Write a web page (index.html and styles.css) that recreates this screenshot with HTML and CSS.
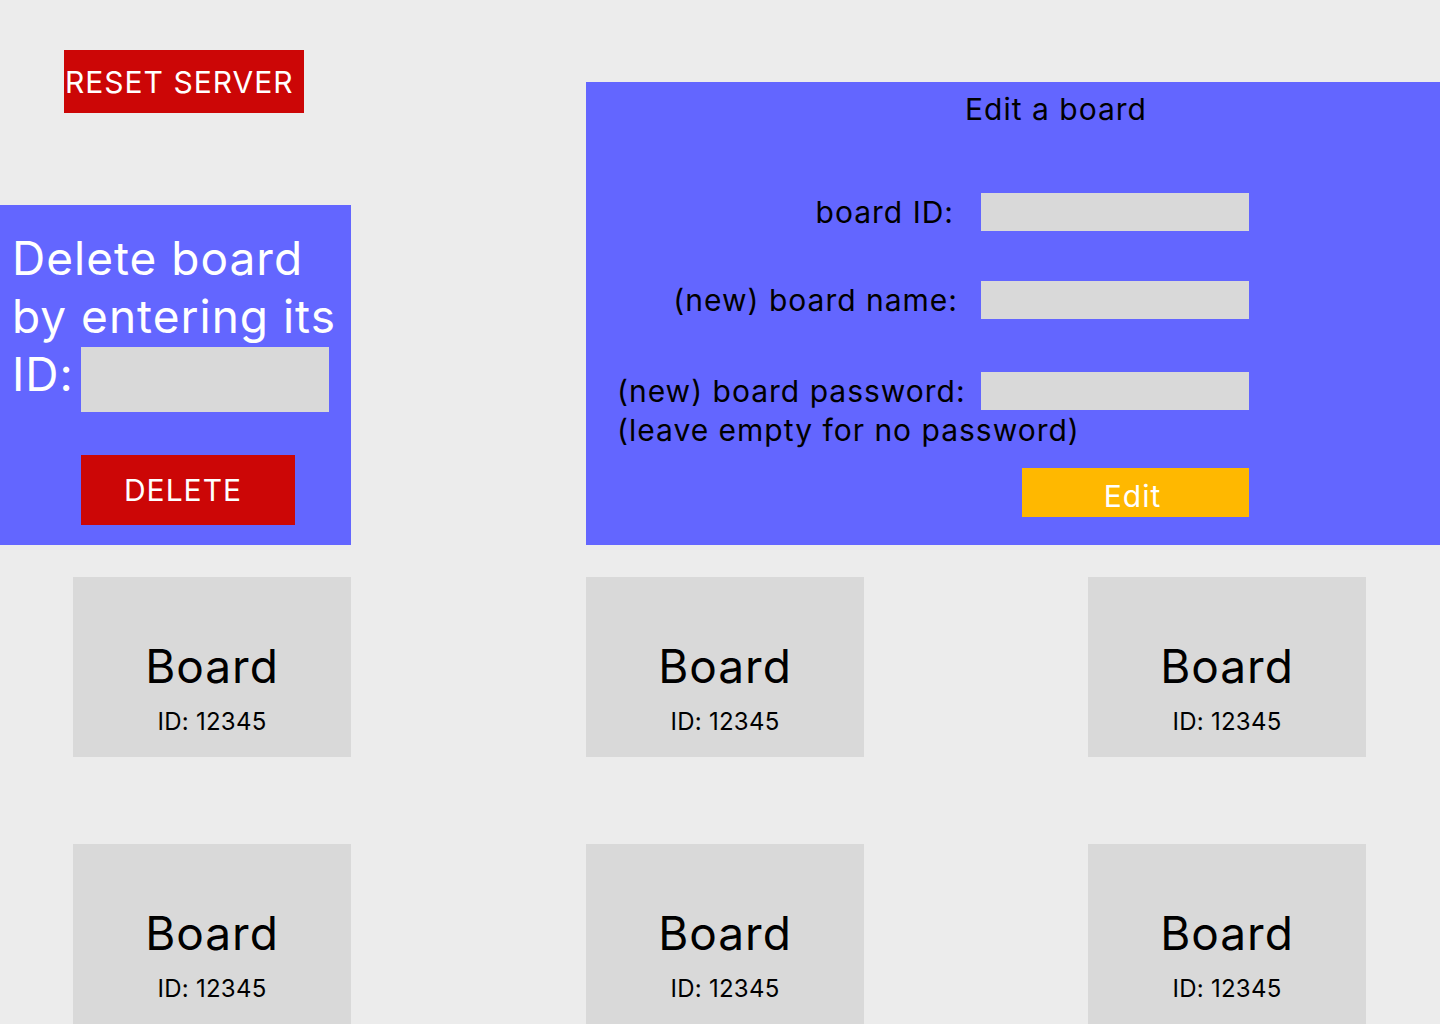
FILE: index.html
```html
<!DOCTYPE html>
<html lang="en">
<head>
<meta charset="utf-8">
<title>Boards admin</title>
<link rel="stylesheet" href="styles.css">
</head>
<body>
<div class="top">
  <div class="left-col">
    <button class="reset-btn">RESET SERVER</button>
    <div class="delete-panel">
      <p class="delete-text">Delete board<br>by entering its<br>ID: <span class="delete-input"></span></p>
      <button class="delete-btn">DELETE</button>
    </div>
  </div>
  <div class="edit-panel">
    <h2 class="edit-title">Edit a board</h2>
    <div class="edit-form">
      <label class="lbl lbl-id">board ID:</label>
      <span class="field"></span>
      <label class="lbl lbl-name">(new) board name:</label>
      <span class="field"></span>
      <label class="lbl lbl-pass">(new) board password:</label>
      <span class="field field-pass"></span>
    </div>
    <p class="note">(leave empty for no password)</p>
    <button class="edit-btn">Edit</button>
  </div>
</div>
<div class="boards">
  <div class="card c1"><span class="card-name">Board</span><span class="card-id">ID: 12345</span></div>
  <div class="card c2"><span class="card-name">Board</span><span class="card-id">ID: 12345</span></div>
  <div class="card c3"><span class="card-name">Board</span><span class="card-id">ID: 12345</span></div>
  <div class="card c1"><span class="card-name">Board</span><span class="card-id">ID: 12345</span></div>
  <div class="card c2"><span class="card-name">Board</span><span class="card-id">ID: 12345</span></div>
  <div class="card c3"><span class="card-name">Board</span><span class="card-id">ID: 12345</span></div>
</div>
</body>
</html>
```
FILE: styles.css
```css
* { box-sizing: border-box; }
html, body { margin: 0; padding: 0; }
body {
  background: #ececec;
  font-family: Inter, "Noto Sans", sans-serif;
  letter-spacing: 1px;
  width: 1440px;
  height: 1024px;
  overflow: hidden;
}
button {
  font-family: inherit;
  letter-spacing: 1px;
  border: none;
  margin: 0;
  cursor: pointer;
}
.top {
  display: flex;
  align-items: flex-end;
  height: 545px;
}
.left-col {
  width: 351px;
  display: flex;
  flex-direction: column;
  align-items: flex-start;
}
.reset-btn {
  margin-left: 64px;
  width: 240px;
  height: 63px;
  background: #cc0606;
  color: #fff;
  font-size: 30px;
  text-align: left;
  padding: 0 0 0 1px;
  white-space: nowrap;
}
.delete-panel {
  margin-top: 92px;
  width: 351px;
  height: 340px;
  background: #6366ff;
  padding: 24px 0 0 12px;
}
.delete-text {
  margin: 0;
  color: #fff;
  font-size: 46px;
  line-height: 58px;
  white-space: nowrap;
}
.delete-input {
  display: inline-block;
  width: 248px;
  height: 65px;
  background: #d9d9d9;
  vertical-align: -21px;
  margin-left: -7px;
}
.delete-btn {
  display: block;
  margin: 43px 0 0 69px;
  width: 214px;
  height: 70px;
  background: #cc0606;
  color: #fff;
  font-size: 30px;
  padding: 0 10px 0 0;
}
.edit-panel {
  margin-left: 235px;
  flex: 1;
  height: 463px;
  background: #6366ff;
  padding: 9px 0 0 31px;
  display: flex;
  flex-direction: column;
  align-items: flex-start;
}
.edit-title {
  margin: 0 0 0 55px;
  align-self: stretch;
  text-align: center;
  font-weight: 400;
  font-size: 30px;
  color: #000;
  line-height: normal;
}
.edit-form {
  margin-top: 66px;
  display: grid;
  grid-template-columns: 346px 268px;
  column-gap: 18px;
  row-gap: 50px;
  align-items: center;
}
.lbl {
  font-size: 30px;
  color: #000;
  white-space: nowrap;
}
.lbl-id { justify-self: end; margin-right: 9px; }
.lbl-name { justify-self: end; margin-right: 5px; }
.lbl-pass { justify-self: start; margin-top: 3px; }
.field {
  display: block;
  height: 38px;
  background: #d9d9d9;
}
.field-pass { margin-top: 3px; }
.note {
  margin: 2px 0 0;
  font-size: 30px;
  color: #000;
  line-height: normal;
}
.edit-btn {
  margin: 20px 0 0 405px;
  width: 227px;
  height: 49px;
  background: #ffb800;
  color: #fff;
  font-size: 30px;
  padding: 6px 6px 0 0;
}
.boards {
  display: grid;
  grid-template-columns: 73px 278px 235px 278px 224px 278px;
  grid-auto-rows: 180px;
  row-gap: 87px;
  padding-top: 32px;
}
.card {
  background: #d9d9d9;
  display: flex;
  flex-direction: column;
  align-items: center;
  padding-top: 61px;
  color: #000;
}
.c1 { grid-column: 2; }
.c2 { grid-column: 4; }
.c3 { grid-column: 6; }
.card-name {
  font-size: 46px;
  line-height: normal;
}
.card-id {
  font-size: 24px;
  letter-spacing: 0.25px;
  line-height: normal;
  margin-top: 13px;
}
```
